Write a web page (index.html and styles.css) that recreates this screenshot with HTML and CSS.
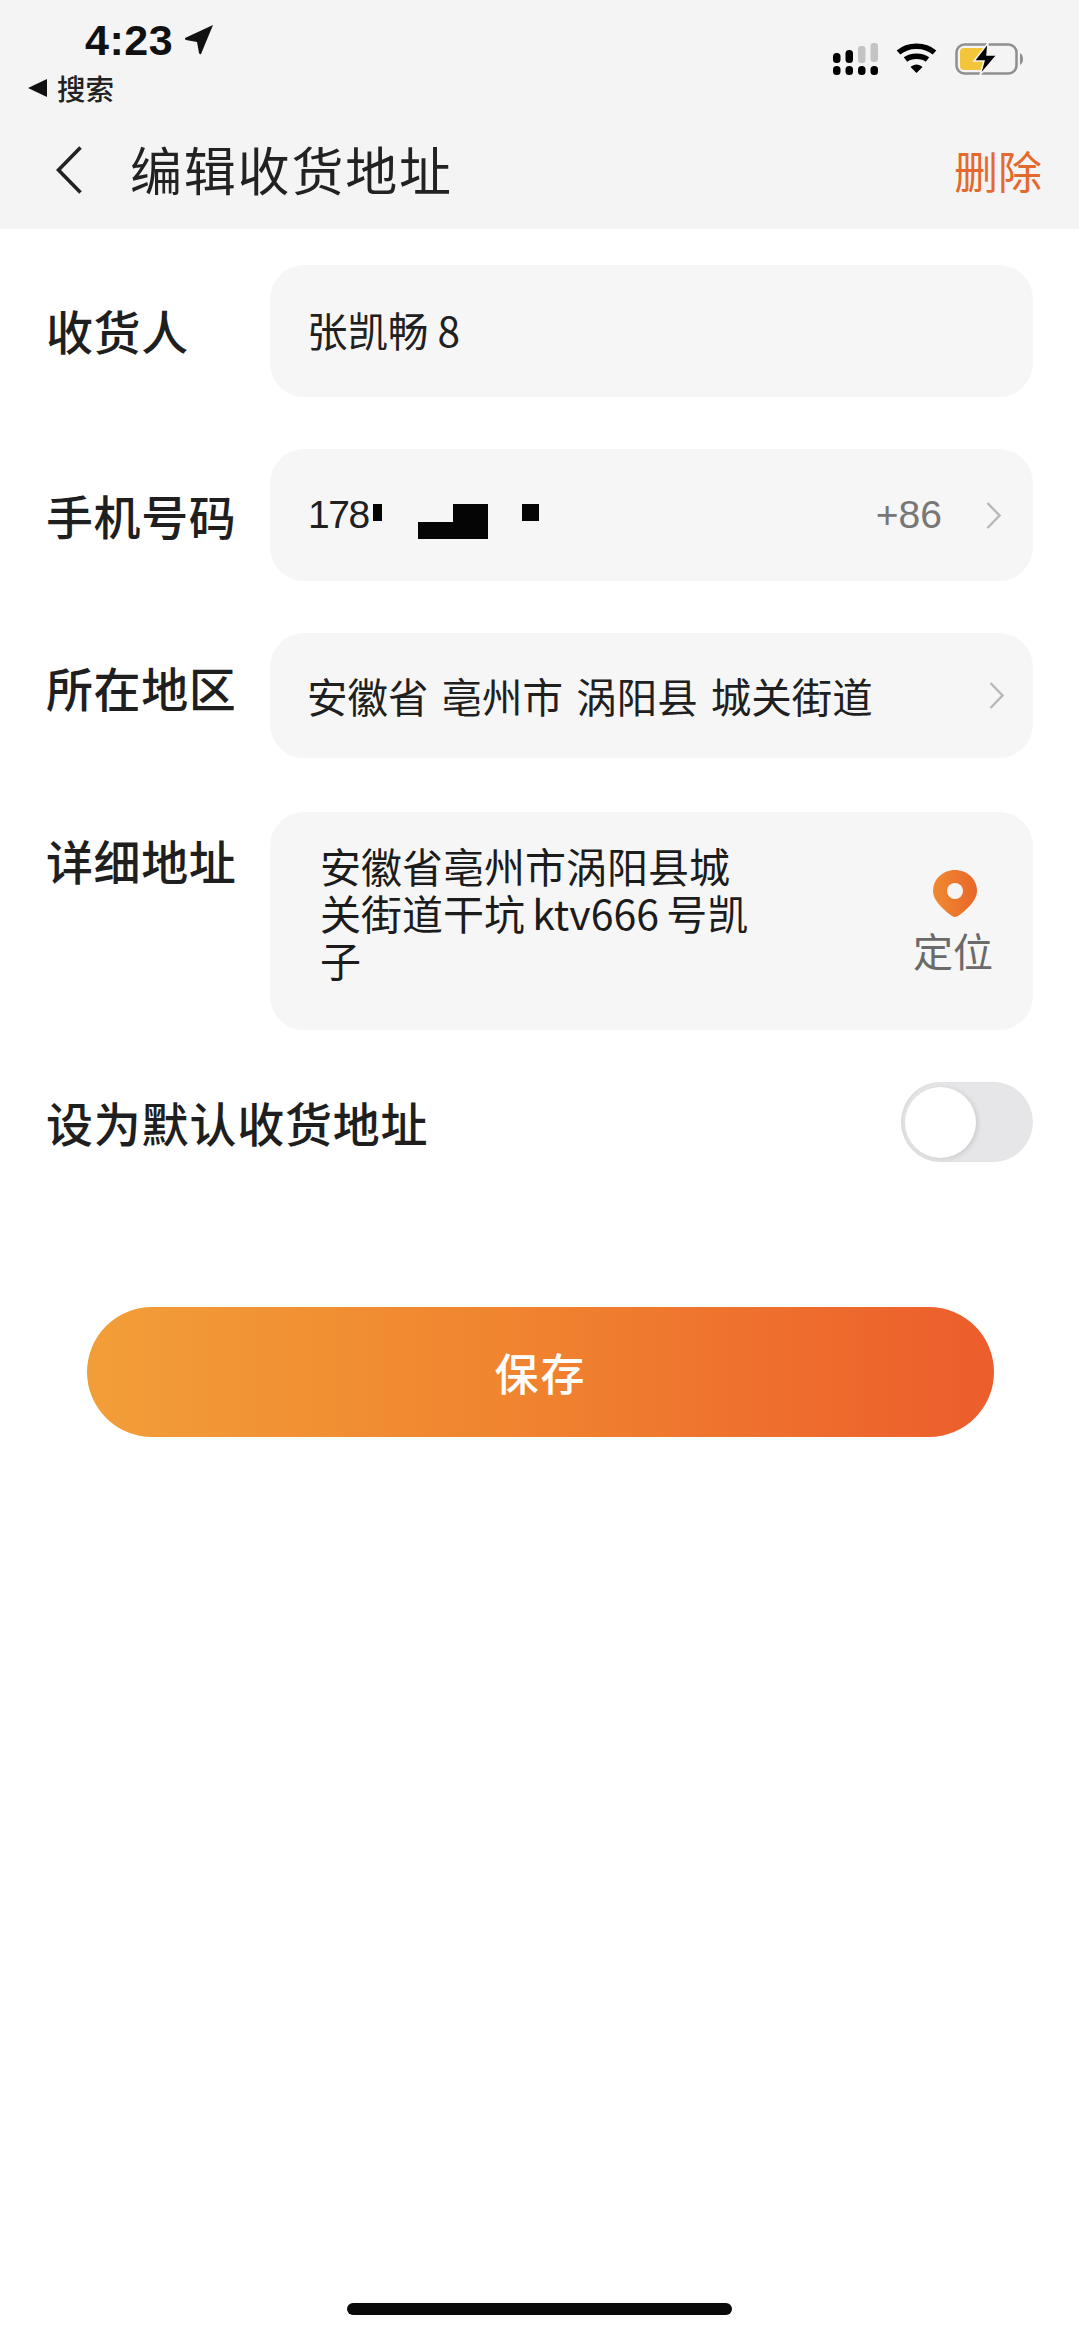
FILE: index.html
```html
<!DOCTYPE html>
<html lang="zh-CN">
<head>
<meta charset="utf-8">
<title>编辑收货地址</title>
<link rel="stylesheet" href="styles.css">
</head>
<body>
<div class="page">
  <header class="header">
    <div class="status">
      <div class="status-left">
        <div class="time-row">
          <span class="time">4:23</span>
          <svg class="loc" viewBox="0 0 28 30"><path d="M0 13 L28 0 L16 29 Q15 30 14 28 L12 17 L1 15 Q-1 14 0 13Z"/></svg>
        </div>
        <div class="crumb">
          <svg class="crumb-arrow" viewBox="0 0 19 18"><path d="M19 0V18L0 9Z"/></svg>
          <span>搜索</span>
        </div>
      </div>
      <div class="status-right">
        <svg class="signal" viewBox="0 0 45 32">
          <g fill="#000"><rect x="0" y="23" width="7.500" height="9" rx="3.500"/><rect x="12.500" y="23" width="7.500" height="9" rx="3.500"/><rect x="25" y="23" width="7.500" height="9" rx="3.500"/><rect x="37.500" y="23" width="7.500" height="9" rx="3.500"/><rect x="0" y="10" width="7.500" height="10" rx="3.500"/><rect x="12.500" y="7" width="7.500" height="13" rx="3.500"/></g>
          <g fill="#c4c4c4"><rect x="25" y="3" width="7.500" height="17" rx="3"/><rect x="37.500" y="0" width="7.500" height="19" rx="3"/></g>
        </svg>
        <svg class="wifi" viewBox="0 0 41 31" fill="none" stroke="#000" stroke-width="5.500">
          <path d="M2.500 9.500 C12 1 29 1 38.500 9.500"/>
          <path d="M9.500 16.500 C15 12 26 12 31.500 16.500"/>
          <path d="M14.500 24 L20.500 30 L26.500 24 C23 20.500 18 20.500 14.500 24Z" fill="#000" stroke="none"/>
        </svg>
        <svg class="battery" viewBox="0 0 68 32">
          <rect x="1.500" y="1.500" width="60" height="29" rx="8" fill="none" stroke="#8f8f8f" stroke-width="2.500"/>
          <path d="M9 5H32L27 27H9Q5 27 5 23V9Q5 5 9 5Z" fill="#f2c53b"/>
          <path d="M33 0 L19 18 H29 L25 32 L42 12 H32 Z" fill="#000" stroke="#f4f4f4" stroke-width="1.500"/>
          <path d="M65 10 Q68 12 68 16 Q68 20 65 22Z" fill="#8f8f8f"/>
        </svg>
      </div>
    </div>
    <nav class="nav">
      <svg class="back" viewBox="0 0 26 48" fill="none" stroke="#222" stroke-width="3.600"><path d="M24.500 1.500 L2.500 24 L24.500 46.500"/></svg>
      <h1 class="title">编辑收货地址</h1>
      <span class="delete">删除</span>
    </nav>
  </header>

  <main class="form">
    <div class="row row-name">
      <div class="label">收货人</div>
      <div class="field field-name">张凯畅 8</div>
    </div>
    <div class="row row-phone">
      <div class="label">手机号码</div>
      <div class="field field-phone">
        <span class="phone">178</span>
        <span class="code">+86</span>
        <svg class="chevron" viewBox="0 0 15 27" fill="none" stroke="#b8b8b8" stroke-width="2.400"><path d="M1.500 1 L13.500 13.500 L1.500 26"/></svg>
        <i class="mask mask-a"></i><i class="mask mask-b"></i><i class="mask mask-c"></i><i class="mask mask-d"></i>
      </div>
    </div>
    <div class="row row-region">
      <div class="label">所在地区</div>
      <div class="field field-region">
        <span class="region">安徽省 亳州市 涡阳县 城关街道</span>
        <svg class="chevron" viewBox="0 0 15 27" fill="none" stroke="#b8b8b8" stroke-width="2.400"><path d="M1.500 1 L13.500 13.500 L1.500 26"/></svg>
      </div>
    </div>
    <div class="row row-detail">
      <div class="label">详细地址</div>
      <div class="field field-detail">
        <div class="detail-text">安徽省亳州市涡阳县城<br>关街道干坑 ktv666 号凯<br>子</div>
        <div class="locate">
          <svg class="pin" viewBox="0 0 44 47">
            <defs><linearGradient id="pinfill" x1="0" x2="1" y1="0" y2="0"><stop offset="0" stop-color="#f08a30"/><stop offset="1" stop-color="#e8672a"/></linearGradient></defs>
            <path d="M22 0 C34 0 44 9 44 21 C44 31 32 41 25 46 Q22 48 19 46 C12 41 0 31 0 21 C0 9 10 0 22 0Z" fill="url(#pinfill)"/>
            <circle cx="22" cy="21" r="8" fill="#f5f5f5"/>
          </svg>
          <span>定位</span>
        </div>
      </div>
    </div>
    <div class="row row-default">
      <div class="label label-long">设为默认收货地址</div>
      <div class="switch"><div class="knob"></div></div>
    </div>
    <button class="save">保存</button>
  </main>
  <div class="home-bar"></div>
</div>
</body>
</html>
```

FILE: styles.css
```css
* { box-sizing: border-box; }
html, body { margin: 0; padding: 0; background: #fff; }
body { font-family: "Noto Sans CJK SC", "Noto Sans", sans-serif; color: #1c1c1c; }
.page { width: 1079px; height: 2337px; display: flex; flex-direction: column; overflow: hidden; }

/* header */
.header { height: 229px; background: #f4f4f4; flex: none; }
.status { height: 115px; display: flex; justify-content: space-between; }
.status-left { padding: 18px 0 0 28px; }
.time-row { display: flex; align-items: center; gap: 12px; padding-left: 57px; height: 44px; }
.time { font-family: "Liberation Sans", sans-serif; font-weight: 700; font-size: 43px; line-height: 44px; color: #111; letter-spacing: 0.5px; }
.loc { width: 28px; height: 30px; fill: #111; }
.crumb { display: flex; align-items: center; gap: 10px; margin-top: 6px; height: 40px; font-size: 28.500px; line-height: 40px; font-weight: 500; color: #222; }
.crumb-arrow { width: 19px; height: 18px; fill: #111; }
.status-right { display: flex; align-items: flex-start; padding: 43px 56px 0 0; }
.signal { width: 45px; height: 32px; margin-right: 18px; }
.wifi { width: 41px; height: 31px; margin-right: 18px; }
.battery { width: 68px; height: 32px; }

.nav { height: 114px; display: flex; align-items: center; padding: 0 37px 0 56px; }
.back { width: 26px; height: 48px; margin-top: -4px; }
.title { margin: -7px 0 0 48px; font-size: 52px; line-height: 70px; font-weight: 400; color: #222; letter-spacing: 1.800px; flex: 1; }
.delete { font-size: 44px; line-height: 60px; color: #e4692c; margin-top: -4px; }

/* form */
.form { display: flex; flex-direction: column; padding: 36px 46px 0; flex: 1; }
.row { display: flex; justify-content: space-between; }
.label { font-size: 47px; line-height: 66px; font-weight: 500; color: #1f1f1f; letter-spacing: 0.600px; }
.label-long { letter-spacing: 0.800px; }
.field { width: 763px; background: #f6f6f6; border-radius: 34px; display: flex; align-items: center; font-size: 40.500px; color: #202020; position: relative; padding-left: 37px; }

.row-name { height: 132px; align-items: center; }
.row-name .label { margin-top: -2px; }
.field-name { height: 132px; padding-bottom: 3px; }
.row-phone { height: 132px; margin-top: 52px; align-items: center; }
.row-phone .label { margin-top: 0; }
.field-phone { height: 132px; }
.phone { font-family: "Liberation Sans", sans-serif; letter-spacing: -1.500px; font-size: 39px; margin-left: 1px; }
.code { margin-left: auto; margin-right: 44px; font-family: "Liberation Sans", sans-serif; font-size: 39px; color: #777; }
.chevron { width: 15px; height: 27px; margin-right: 32px; flex: none; }
.mask { position: absolute; background: #050505; display: block; }
.mask-a { left: 103px; top: 55px; width: 9px; height: 17px; }
.mask-b { left: 148px; top: 73px; width: 35px; height: 17px; }
.mask-c { left: 183px; top: 55px; width: 35px; height: 35px; }
.mask-d { left: 252px; top: 55px; width: 17px; height: 17px; }

.row-region { height: 125px; margin-top: 52px; align-items: center; }
.row-region .label { margin-top: -18px; }
.field-region { height: 125px; justify-content: space-between; padding-bottom: 1px; word-spacing: 4px; }
.field-region .chevron { margin-right: 29px; }

.row-detail { height: 218px; margin-top: 54px; align-items: flex-start; }
.row-detail .label { margin-top: 15px; }
.field-detail { height: 218px; padding-left: 50px; align-items: flex-start; justify-content: space-between; }
.detail-text { font-size: 41px; line-height: 47px; padding-top: 30px; color: #1c1c1c; word-spacing: -2px; }
.locate { display: flex; flex-direction: column; align-items: center; width: 80px; margin-right: 40px; padding-top: 58px; font-size: 40px; line-height: 54px; color: #6a6a6a; }
.pin { width: 44px; height: 47px; display: block; margin: 0 0 6px 3px; }

.row-default { height: 80px; margin-top: 52px; align-items: center; }
.switch { width: 132px; height: 80px; border-radius: 40px; background: #e6e6e8; padding: 5px 0 0 4px; box-shadow: inset 2px 0 2px #dcdcdc; }
.knob { width: 71px; height: 71px; border-radius: 50%; background: #fff; box-shadow: 2px 1px 5px rgba(0,0,0,.12); }

.save { display: block; width: 907px; height: 130px; margin: 145px 0 0 41px; border: 0; border-radius: 65px; background: linear-gradient(90deg, #f29e38 0%, #f0822f 50%, #ec5d2c 100%); color: #fff; font-family: inherit; font-size: 44px; font-weight: 500; letter-spacing: 2px; padding: 0; }

.home-bar { flex: none; width: 385px; height: 12px; border-radius: 6px; background: #0a0a0a; margin: 0 0 22px 347px; }
```
